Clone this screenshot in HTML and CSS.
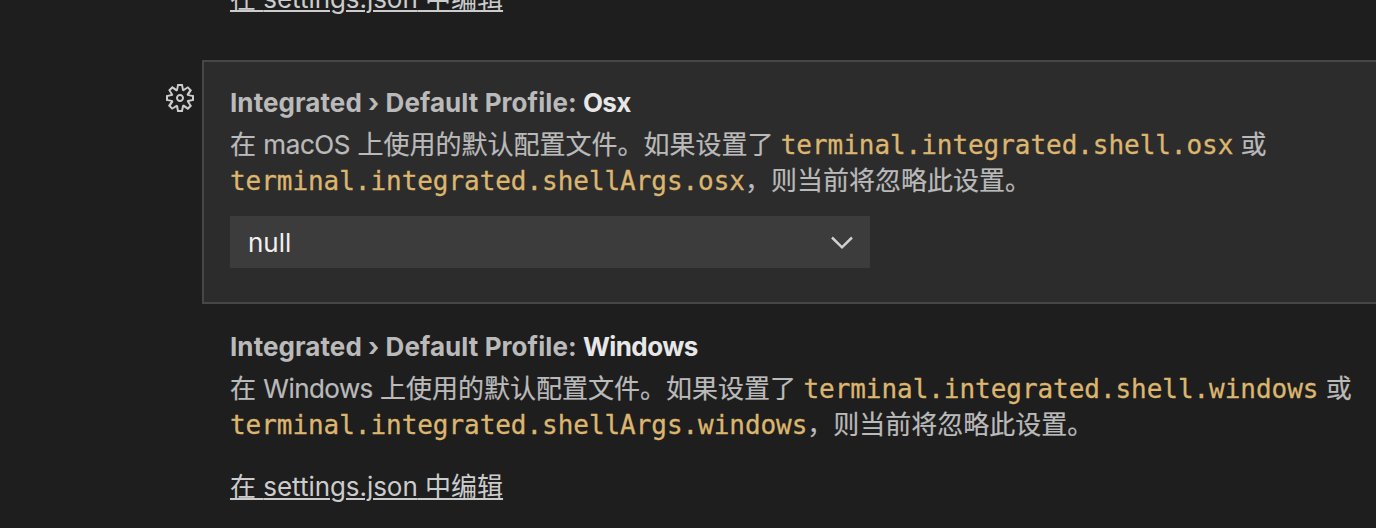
FILE: index.html
```
<!DOCTYPE html>
<html lang="zh-CN">
<head>
<meta charset="utf-8">
<title>设置</title>
<link rel="stylesheet" href="styles.css">
</head>
<body>
<main class="settings">
  <div class="setting previous">
    <a class="edit-link">在 <span class="latin-link">settings.json</span> 中编辑</a>
  </div>
  <div class="row">
    <div class="gutter">
      <svg class="gear" viewBox="1 1 14 14" fill="#cccccc" fill-rule="evenodd">
        <path d="M9.1 4.4L8.6 2H7.4l-.5 2.4-.7.3-2-1.3-.9.8 1.3 2-.2.7-2.4.5v1.2l2.4.5.3.8-1.3 2 .8.8 2-1.3.8.3.4 2.3h1.2l.5-2.4.8-.3 2 1.3.8-.8-1.3-2 .3-.8 2.3-.4V7.4l-2.4-.5-.3-.8 1.3-2-.8-.8-2 1.3-.7-.2zM9.4 1l.5 2.4L12 2.1l2 2-1.4 2.1 2.4.4v2.8l-2.4.5L14 12l-2 2-2.1-1.4-.5 2.4H6.6l-.5-2.4L4 13.9l-2-2 1.4-2.1L1 9.4V6.6l2.4-.5L2.1 4l2-2 2.1 1.4.4-2.4h2.8zm.6 7c0 1.1-.9 2-2 2s-2-.9-2-2 .9-2 2-2 2 .9 2 2zM8 9c.6 0 1-.4 1-1s-.4-1-1-1-1 .4-1 1 .4 1 1 1z"/>
      </svg>
    </div>
    <section class="setting focused">
      <h3 class="title"><span class="category">Integrated › Default Profile:</span> <span class="name">Osx</span></h3>
      <p class="description">在 <span class="latin-mac">macOS</span> 上使用的默认配置文件。如果设置了 <code>terminal.integrated.shell.osx</code> 或<br><code>terminal.integrated.shellArgs.osx</code>，则当前将忽略此设置。</p>
      <div class="select">
        <span class="value">null</span>
        <svg class="chevron" viewBox="0 0 22 14" fill="none" stroke="#d0d0d0" stroke-width="2.5"><path d="M1 1.5 11 11.3l10-9.8"/></svg>
      </div>
    </section>
  </div>
  <section class="setting windows">
    <h3 class="title"><span class="category">Integrated › Default Profile:</span> <span class="name">Windows</span></h3>
    <p class="description">在 <span class="latin-windows">Windows</span> 上使用的默认配置文件。如果设置了 <code>terminal.integrated.shell.windows</code> 或<br><code>terminal.integrated.shellArgs.windows</code>，则当前将忽略此设置。</p>
    <a class="edit-link">在 <span class="latin-link">settings.json</span> 中编辑</a>
  </section>
</main>
</body>
</html>
```
FILE: styles.css
```
* { box-sizing: border-box; }
body {
  margin: 0;
  background: #1e1e1e;
  color: #bababa;
  font: 26px/36px Inter, "Noto Sans CJK SC", sans-serif;
  overflow: hidden;
}
.settings { display: flow-root; height: 528px; overflow: hidden; }
.previous { display: flow-root; height: 60px; padding-left: 230px; }
.previous .edit-link { margin-top: -19px; }
.row { display: flex; height: 244px; }
.gutter { width: 202px; padding: 24px 8px 0 0; display: flex; justify-content: flex-end; }
.gear { width: 28px; height: 28px; }
.focused {
  flex: 1;
  border: 2px solid #474747;
  border-right: 0;
  background: #2c2c2c;
  padding: 23px 0 0 26px;
}
.windows { padding: 25px 0 0 230px; }
.title { margin: 0; height: 36px; font-size: 26px; font-weight: 650; white-space: nowrap; }
.category { letter-spacing: .07px; }
.name { color: #e7e7e7; letter-spacing: -.6px; }
.description { margin: 6px 0 0; height: 72px; white-space: nowrap; -webkit-text-stroke: .2px; }
.latin-mac { letter-spacing: -.4px; }
.latin-windows { letter-spacing: -.55px; }
.latin-link { letter-spacing: -.05px; }
code {
  font-family: "DejaVu Sans Mono", monospace;
  font-size: 26px;
  line-height: 1;
  letter-spacing: -.05px;
  color: #dcb66f;
  -webkit-text-stroke: .3px;
}
.select {
  display: flex;
  align-items: center;
  justify-content: space-between;
  width: 640px;
  height: 52px;
  margin-top: 17px;
  padding: 2px 17px 0 18px;
  background: #3c3c3c;
  color: #f0f0f0;
}
.chevron { width: 22px; height: 14px; }
.edit-link {
  display: block;
  width: max-content;
  color: #cccccc;
  text-decoration: underline;
  text-decoration-thickness: 2px;
  text-underline-offset: 2px;
}
.windows .edit-link { margin-top: 26px; }
```
